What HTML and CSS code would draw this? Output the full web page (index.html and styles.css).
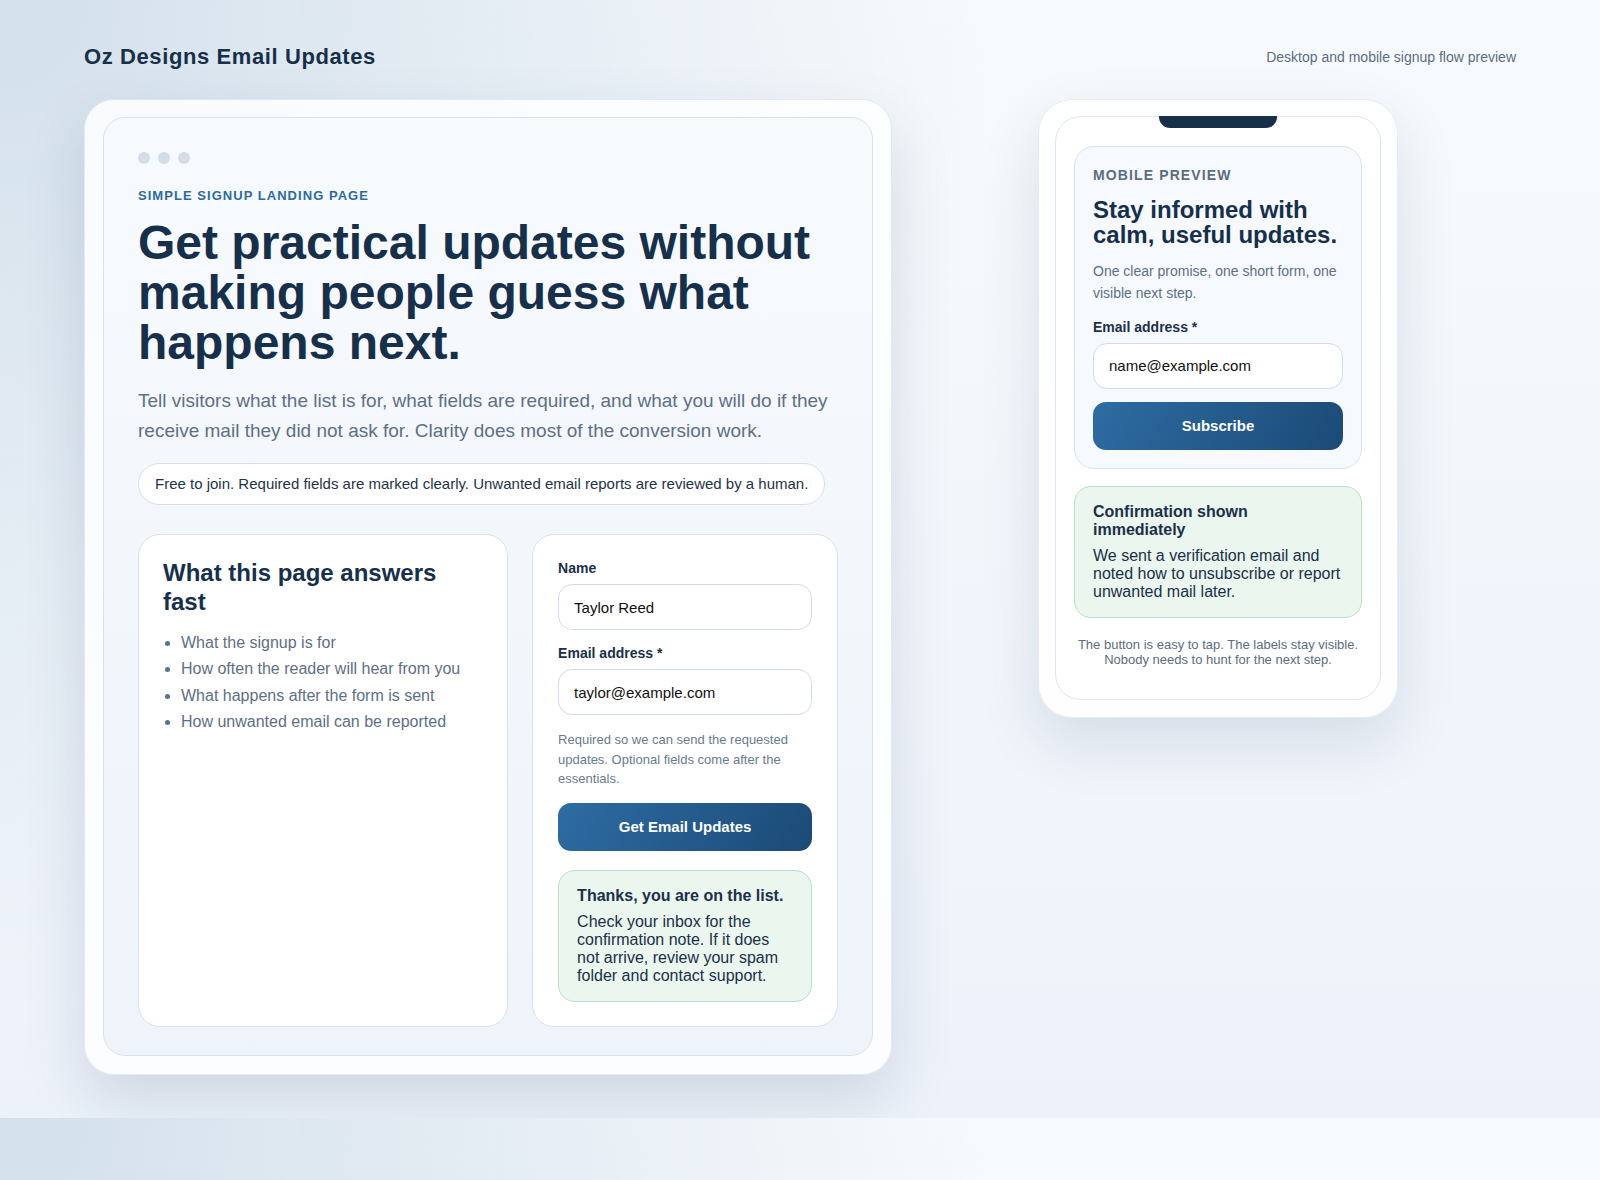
FILE: index.html
```html
<!DOCTYPE html>
<html lang="en">
<head>
<meta charset="utf-8">
<title>Oz Designs Email Updates</title>
<link rel="stylesheet" href="styles.css">
</head>
<body>
<div class="page">
  <header class="topbar">
    <h1 class="brand">Oz Designs Email Updates</h1>
    <p class="topnote">Desktop and mobile signup flow preview</p>
  </header>

  <main class="stage">
    <section class="desktop">
      <div class="screen">
        <div class="dots"><span></span><span></span><span></span></div>
        <p class="eyebrow">Simple signup landing page</p>
        <h2 class="hero">Get practical updates without making people guess what happens next.</h2>
        <p class="lead">Tell visitors what the list is for, what fields are required, and what you will do if they receive mail they did not ask for. Clarity does most of the conversion work.</p>
        <p class="pill">Free to join. Required fields are marked clearly. Unwanted email reports are reviewed by a human.</p>

        <div class="cols">
          <div class="card info">
            <h3 class="info-title">What this page answers fast</h3>
            <ul class="info-list">
              <li>What the signup is for</li>
              <li>How often the reader will hear from you</li>
              <li>What happens after the form is sent</li>
              <li>How unwanted email can be reported</li>
            </ul>
          </div>

          <form class="card form" onsubmit="return false">
            <div class="field">
              <label class="label" for="d-name">Name</label>
              <input class="input" id="d-name" type="text" value="Taylor Reed">
            </div>
            <div class="field">
              <label class="label" for="d-email">Email address *</label>
              <input class="input" id="d-email" type="email" value="taylor@example.com">
            </div>
            <p class="hint">Required so we can send the requested updates. Optional fields come after the essentials.</p>
            <button class="btn" type="button">Get Email Updates</button>
            <div class="success desk-success">
              <p class="success-title">Thanks, you are on the list.</p>
              <p class="success-body">Check your inbox for the confirmation note. If it does not arrive, review your spam folder and contact support.</p>
            </div>
          </form>
        </div>
      </div>
    </section>

    <section class="phone-col">
      <div class="phone">
        <div class="phone-screen">
          <span class="notch"></span>
          <div class="m-card">
            <p class="m-eyebrow">Mobile preview</p>
            <h2 class="m-title">Stay informed with calm, useful updates.</h2>
            <p class="m-lead">One clear promise, one short form, one visible next step.</p>
            <div class="field m-field">
              <label class="label" for="m-email">Email address *</label>
              <input class="input" id="m-email" type="email" value="name@example.com">
            </div>
            <button class="btn m-btn" type="button">Subscribe</button>
          </div>
          <div class="success">
            <p class="success-title">Confirmation shown immediately</p>
            <p class="success-body">We sent a verification email and noted how to unsubscribe or report unwanted mail later.</p>
          </div>
          <p class="m-caption">The button is easy to tap. The labels stay visible. Nobody needs to hunt for the next step.</p>
        </div>
      </div>
    </section>
  </main>
</div>
</body>
</html>
```

FILE: styles.css
```css
* { box-sizing: border-box; }

html { margin: 0; }

body {
  margin: 0;
  font-family: "Liberation Sans", Arial, sans-serif;
  color: #17304a;
  background:
    radial-gradient(circle 1000px at 0 0, #d3e0eb 0%, rgba(211, 224, 235, 0) 100%),
    linear-gradient(180deg, #f7fafd 0%, #edf2fa 100%);
}

.page {
  padding: 44px 84px 43px;
}

/* header */
.topbar {
  display: flex;
  justify-content: space-between;
  align-items: center;
}

.brand {
  margin: 0;
  font-size: 22px;
  line-height: 25px;
  font-weight: 700;
  letter-spacing: 0.6px;
  color: #17304a;
}

.topnote {
  margin: 0;
  font-size: 14px;
  color: #5b6d80;
}

/* stage */
.stage {
  margin-top: 30px;
  display: grid;
  grid-template-columns: 808px 1fr;
  column-gap: 28px;
  align-items: start;
}

/* desktop frame */
.desktop {
  border: 1px solid #e3e9f1;
  border-radius: 30px;
  padding: 17px 18px 18px;
  background: rgba(255, 255, 255, 0.84);
  box-shadow: 0 26px 60px rgba(32, 58, 94, 0.15);
}

.screen {
  border: 1px solid #d6e2ee;
  border-radius: 22px;
  padding: 34px 34px 28px;
  background: linear-gradient(180deg, #f7fafd 0%, #eff4fb 100%);
}

.dots {
  display: flex;
  gap: 8px;
  margin-bottom: 23px;
}
.dots span {
  width: 12px;
  height: 12px;
  border-radius: 50%;
  background: #d3dde8;
}

.eyebrow {
  margin: 0 0 13px;
  font-size: 13px;
  line-height: 18px;
  font-weight: 700;
  letter-spacing: 0.08em;
  text-transform: uppercase;
  color: #2e6aa1;
}

.hero {
  margin: 0 0 18px;
  font-size: 48px;
  line-height: 50px;
  font-weight: 700;
  color: #16304b;
}

.lead {
  margin: 0 0 17px;
  font-size: 19px;
  line-height: 30px;
  color: #5d7086;
}

.pill {
  display: inline-block;
  margin: 0 0 29px;
  padding: 11px 16px;
  font-size: 15px;
  line-height: 18px;
  color: #1f3347;
  background: #ffffff;
  border: 1px solid #d3e0ed;
  border-radius: 999px;
}

.cols {
  display: grid;
  grid-template-columns: minmax(0, 1.21fr) minmax(0, 1fr);
  column-gap: 24px;
}

.card {
  background: #ffffff;
  border: 1px solid #d8e3ee;
  border-radius: 22px;
  padding: 24px;
}

.info-title {
  margin: 0 0 13px;
  font-size: 24px;
  line-height: 1.2;
  font-weight: 700;
  color: #16304b;
}

.info-list {
  margin: 0;
  padding-left: 18px;
  font-size: 16px;
  line-height: 26.5px;
  color: #5d7086;
}

/* form */
.form {
  display: flex;
  flex-direction: column;
  gap: 15px;
  margin: 0;
  padding: 25px 25px 24px;
}

.field {
  display: flex;
  flex-direction: column;
  gap: 8px;
}

.label {
  font-size: 14px;
  line-height: 16px;
  font-weight: 700;
  color: #1b3049;
}

.input {
  display: block;
  width: 100%;
  height: 46px;
  margin: 0;
  padding: 0 15px;
  font-family: "Liberation Sans", Arial, sans-serif;
  font-size: 15px;
  color: #111111;
  background: #ffffff;
  border: 1px solid #cfdcea;
  border-radius: 14px;
  outline: none;
}

.hint {
  margin: 0 0 -1px;
  font-size: 13px;
  line-height: 1.5;
  color: #687b90;
}

.btn {
  display: block;
  width: 100%;
  height: 48px;
  margin: 0;
  border: 0;
  border-radius: 13px;
  font-family: "Liberation Sans", Arial, sans-serif;
  font-size: 15px;
  font-weight: 700;
  color: #ffffff;
  background: linear-gradient(120deg, #2e6ca3 0%, #1b4a76 100%);
  cursor: pointer;
}

.success {
  padding: 16px 18px;
  background: #eaf6ee;
  border: 1px solid #b8e1c5;
  border-radius: 17px;
  color: #1b3049;
}

.desk-success {
  margin-top: 4px;
}

.success-title {
  margin: 0 0 8px;
  font-size: 16px;
  font-weight: 700;
}

.success-body {
  margin: 0;
  font-size: 16px;
}

/* phone */
.phone-col {
  display: flex;
  justify-content: center;
}

.phone {
  width: 360px;
  padding: 16px 16px 17px;
  border: 1px solid #e6ecf2;
  border-radius: 34px;
  background: rgba(255, 255, 255, 0.88);
  box-shadow: 0 24px 60px rgba(32, 58, 94, 0.13);
}

.phone-screen {
  position: relative;
  display: flex;
  flex-direction: column;
  gap: 17px;
  padding: 29px 18px 31px;
  border: 1px solid #dfe6ee;
  border-radius: 26px;
  background: #ffffff;
}

.notch {
  position: absolute;
  top: -1px;
  left: 50%;
  width: 118px;
  height: 12px;
  margin-left: -59px;
  border-radius: 0 0 11px 11px;
  background: #17304a;
}

.m-card {
  padding: 18px;
  border: 1px solid #d8e3ee;
  border-radius: 20px;
  background: #f6f9fd;
}

.m-eyebrow {
  margin: 0 0 12px;
  font-size: 14px;
  line-height: 20px;
  font-weight: 700;
  letter-spacing: 0.08em;
  text-transform: uppercase;
  color: #5b6d80;
}

.m-title {
  margin: 0 0 14px;
  font-size: 24px;
  line-height: 1.05;
  font-weight: 700;
  color: #16304b;
}

.m-lead {
  margin: 0 0 14px;
  font-size: 14px;
  line-height: 1.55;
  color: #5d7086;
}

.m-btn {
  margin-top: 13px;
}

.m-caption {
  margin: 2px 0 0;
  font-size: 13px;
  line-height: 1.2;
  text-align: center;
  color: #5b6d80;
}
```
